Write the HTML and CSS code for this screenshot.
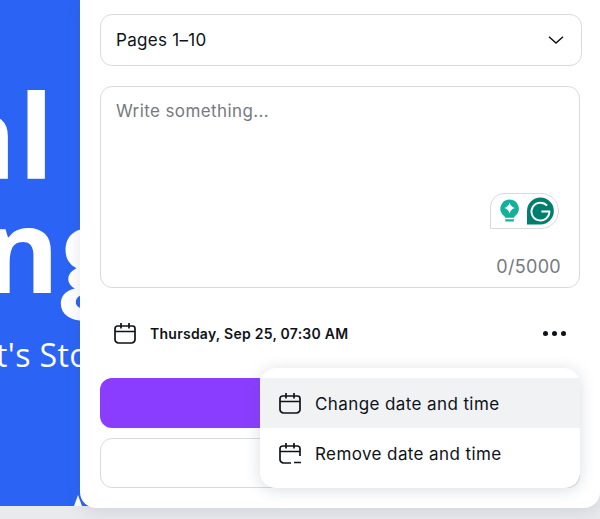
FILE: index.html
```html
<!DOCTYPE html>
<html lang="en">
<head>
    <meta charset="UTF-8">
    <meta name="viewport" content="width=device-width, initial-scale=1.0">
    <title>Schedule post</title>
    <link rel="stylesheet" href="styles.css">
</head>
<body>
    <div class="layout">
        <div class="hero">
            <div class="hero-big hero-al">al</div>
            <div class="hero-big hero-ng">ng</div>
            <div class="hero-sub">t's Sto</div>
            <div class="hero-chip"></div>
        </div>
        <div class="panel">
            <div class="select">
                <span>Pages 1–10</span>
                <svg class="chevron" width="16" height="16" viewBox="0 0 16 16"><path d="M1 4.800 8 11l7-6.200" fill="none" stroke="#0e1318" stroke-width="1.500"/></svg>
            </div>
            <div class="textarea">
                <div class="placeholder">Write something...</div>
                <div class="grammarly">
                    <svg width="20" height="24" viewBox="0 0 20 24">
                        <path d="M10 0a9.500 9.500 0 0 1 6 16.900c-.9.800-1.200 1.500-1.300 2.100H5.300c-.1-.6-.4-1.300-1.300-2.100A9.500 9.500 0 0 1 10 0z" fill="#13b09a"/>
                        <path d="M5.300 20.500h9.400l-.5 2.500H5.800z" fill="#13b09a"/>
                        <path d="M10 3.500c1 3 2.500 4.500 5.500 5.500-3 1-4.500 2.500-5.500 5.500-1-3-2.500-4.500-5.500-5.500 3-1 4.500-2.500 5.500-5.500z" fill="#fff"/>
                    </svg>
                    <svg width="28" height="28" viewBox="0 0 28 28">
                        <path d="M14 0a14 14 0 0 1 0 28H0V14A14 14 0 0 1 14 0z" fill="#027e6f"/>
                        <path d="M21 8.500A9.300 9.300 0 1 0 23.300 14.500H15" fill="none" stroke="#fff" stroke-width="2"/>
                    </svg>
                </div>
                <div class="counter">0/5000</div>
            </div>
            <div class="date-row">
                <div class="date-left">
                    <svg class="cal" width="24" height="24" viewBox="0 0 24 24"><path d="M4.500 5h15A2.500 2.500 0 0 1 22 7.500v11a3.500 3.500 0 0 1-3.500 3.500h-13A3.500 3.500 0 0 1 2 18.500v-11A2.500 2.500 0 0 1 4.500 5zM2 10.500h20M8 2v5.500M16 2v5.500" fill="none" stroke="#0e1318" stroke-width="1.700"/></svg>
                    <span class="date-text">Thursday, Sep 25, 07:30 AM</span>
                </div>
                <div class="dots"><i></i><i></i><i></i></div>
            </div>
            <div class="btn-primary"></div>
            <div class="btn-outline"></div>
            <div class="menu">
                <div class="menu-item active">
                    <svg class="cal" width="24" height="24" viewBox="0 0 24 24"><path d="M4.500 5h15A2.500 2.500 0 0 1 22 7.500v11a3.500 3.500 0 0 1-3.500 3.500h-13A3.500 3.500 0 0 1 2 18.500v-11A2.500 2.500 0 0 1 4.500 5zM2 10.500h20M8 2v5.500M16 2v5.500" fill="none" stroke="#0e1318" stroke-width="1.700"/></svg>
                    <span>Change date and time</span>
                </div>
                <div class="menu-item">
                    <svg class="cal" width="24" height="24" viewBox="0 0 24 24"><path d="M22 15V7.500A2.500 2.500 0 0 0 19.500 5h-15A2.500 2.500 0 0 0 2 7.500v11A3.500 3.500 0 0 0 5.500 22H13M2 10.500h20M8 2v5.500M16 2v5.500M16 21.500h7" fill="none" stroke="#0e1318" stroke-width="1.700"/></svg>
                    <span>Remove date and time</span>
                </div>
            </div>
        </div>
    </div>
</body>
</html>
```

FILE: styles.css
```css
html, body { margin: 0; height: 100%; overflow: hidden; }
body { background: #e9eaee; font-family: Inter, Arial, sans-serif; color: #0e1318; }
.layout { display: flex; height: 508px; }

/* hero sits partly under the panel so its rounded corner shows blue */
.hero { position: relative; width: 96px; height: 506px; flex: none; background: #2b64f5; color: #fff; overflow: hidden; display: flex; flex-direction: column; align-items: flex-end; font-family: "Open Sans", Arial, sans-serif; }
.hero-big { font-size: 116px; line-height: 114px; font-weight: 700; white-space: nowrap; }
.hero-al { margin: 77px 40px 0 0; letter-spacing: 2px; }
.hero-ng { margin: 0 -31px 0 0; letter-spacing: 1px; }
.hero-sub { font-size: 32px; line-height: 40px; letter-spacing: .4px; margin: 30px 7px 0 0; white-space: nowrap; }
.hero-chip { position: absolute; left: 74px; top: 495px; width: 8px; height: 11px; background: #fff; clip-path: polygon(50% 0, 100% 100%, 0 100%); }

.panel { position: relative; flex: 1; margin-left: -16px; background: #fff; border-radius: 0 0 16px 16px; padding: 14px 18px 0 20px; box-shadow: 0 4px 16px rgba(64, 87, 109, .14); }

.select { height: 50px; border: 1px solid #d8dae2; border-radius: 12px; display: flex; align-items: center; justify-content: space-between; padding: 0 17px 0 15px; font-size: 17px; letter-spacing: .3px; }
.textarea { position: relative; box-sizing: border-box; width: 480px; height: 202px; margin-top: 20px; border: 1px solid #d8dae2; border-radius: 12px; padding: 12px 15px; font-size: 17px; letter-spacing: .4px; }
.placeholder { color: #767a80; line-height: 24px; }
.counter { position: absolute; right: 18px; bottom: 8px; color: #767a80; font-size: 18px; letter-spacing: .3px; line-height: 24px; }

.grammarly { position: absolute; right: 20px; top: 106px; width: 69px; height: 36px; box-sizing: border-box; border: 1px solid #d8dae2; border-radius: 14px 18px 18px 0; background: #fff; display: flex; align-items: center; gap: 8px; padding: 0 4px 0 9px; }

.date-row { display: flex; align-items: center; justify-content: space-between; width: 480px; height: 50px; margin-top: 20px; }
.date-left { display: flex; align-items: center; gap: 13px; padding-left: 13px; }
.date-text { font-size: 14px; font-weight: 600; letter-spacing: .25px; }
.dots { display: flex; gap: 4px; padding-right: 14px; }
.dots i { width: 5px; height: 5px; border-radius: 50%; background: #0e1318; }

.btn-primary { width: 480px; height: 50px; margin-top: 20px; background: #8b3dff; border-radius: 12px; }
.btn-outline { box-sizing: border-box; width: 480px; height: 50px; margin-top: 10px; border: 1px solid #d8dae2; border-radius: 12px; }

.menu { position: absolute; left: 180px; top: 368px; width: 320px; height: 120px; box-sizing: border-box; padding: 10px 0; background: #fff; border-radius: 16px; box-shadow: 0 2px 16px rgba(64, 87, 109, .2); }
.menu-item { height: 50px; display: flex; align-items: center; gap: 13px; padding-left: 18px; font-size: 17px; letter-spacing: .4px; }
.menu-item span { padding-top: 2px; }
.menu-item.active { background: #f1f2f4; }
```
